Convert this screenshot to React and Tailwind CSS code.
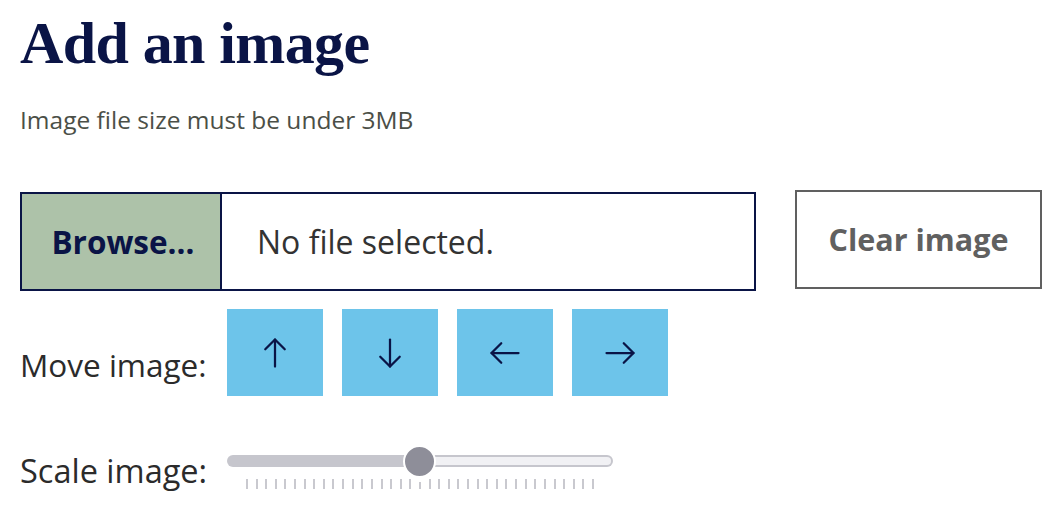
const sans = { fontFamily: '"Open Sans", "Noto Sans", sans-serif' };

// thin arrow, rotated for each direction
function Arrow({ rotate }) {
  return (
    <svg
      width="36"
      height="36"
      viewBox="0 0 24 24"
      fill="none"
      stroke="currentColor"
      strokeWidth="1.5"
      strokeLinecap="round"
      strokeLinejoin="round"
      className={rotate}
    >
      <path d="M12 3v18" />
      <path d="M5.5 9.5 12 3l6.5 6.5" />
    </svg>
  );
}

function MoveButton({ children }) {
  return (
    <button className="w-[96px] h-[87px] bg-[#6dc4ea] flex items-center justify-center text-[#0a1446]">
      {children}
    </button>
  );
}

function ScaleSlider() {
  const ticks = Array.from({ length: 37 }, (_, i) => i);
  return (
    <div className="relative w-[386px] h-[48px]">
      <div className="absolute left-0 right-0 top-[10px] h-[12px] flex">
        <div className="w-[192px] h-full bg-[#c6c6cd] rounded-l-full" />
        <div className="flex-1 h-full bg-[#f1f1f4] border-2 border-[#c6c6cd] border-l-0 rounded-r-full" />
      </div>
      <div className="absolute left-[176px] top-0 w-[33px] h-[33px] rounded-full bg-[#8e8e99] border-2 border-white" />
      <div className="absolute left-[19px] top-[34px] w-[348px] flex justify-between items-end h-[10px]">
        {ticks.map(i => (
          <div key={i} className={i === 18 ? 'w-[2px] h-[7px] bg-[#c9c9cf]' : 'w-[2px] h-[10px] bg-[#c9c9cf]'} />
        ))}
      </div>
    </div>
  );
}

export default function App() {
  return (
    <div className="w-[1062px] h-[520px] bg-white pl-[20px] pt-[10px]" style={sans}>
      <h1
        className="text-[60px] leading-[66px] font-bold text-[#0a1446] tracking-[-0.6px]"
        style={{ fontFamily: '"Liberation Serif", serif' }}
      >
        Add an image
      </h1>
      <p className="mt-[30px] text-[24.5px] leading-[28px] text-[#4b4f47]">
        Image file size must be under 3MB
      </p>

      <div className="mt-[56px] flex items-start">
        <div className="mt-[2px] w-[736px] h-[99px] border-2 border-[#0a1446] flex">
          <div className="w-[200px] h-full bg-[#adc2a9] border-r-2 border-[#0a1446] flex items-center justify-center pl-[4px] text-[31.5px] font-bold text-[#0a1446]">
            Browse…
          </div>
          <div className="flex-1 flex items-center pl-[35px] text-[32px] text-[#333333]">
            No file selected.
          </div>
        </div>
        <button className="ml-[39px] w-[247px] h-[99px] border-2 border-[#606060] text-[30.5px] font-bold text-[#606060] flex items-center justify-center">
          Clear image
        </button>
      </div>

      <div className="mt-[18px] flex items-start">
        <div className="w-[207px] pt-[38px] text-[31.5px] leading-[36px] text-[#2b2b2b]">Move image:</div>
        <div className="flex gap-[19px]">
          <MoveButton><Arrow rotate="" /></MoveButton>
          <MoveButton><Arrow rotate="rotate-180" /></MoveButton>
          <MoveButton><Arrow rotate="-rotate-90" /></MoveButton>
          <MoveButton><Arrow rotate="rotate-90" /></MoveButton>
        </div>
      </div>

      <div className="mt-[49px] flex items-start">
        <div className="w-[207px] pt-[8px] text-[32.5px] leading-[36px] text-[#2b2b2b]">Scale image:</div>
        <ScaleSlider />
      </div>
    </div>
  );
}
